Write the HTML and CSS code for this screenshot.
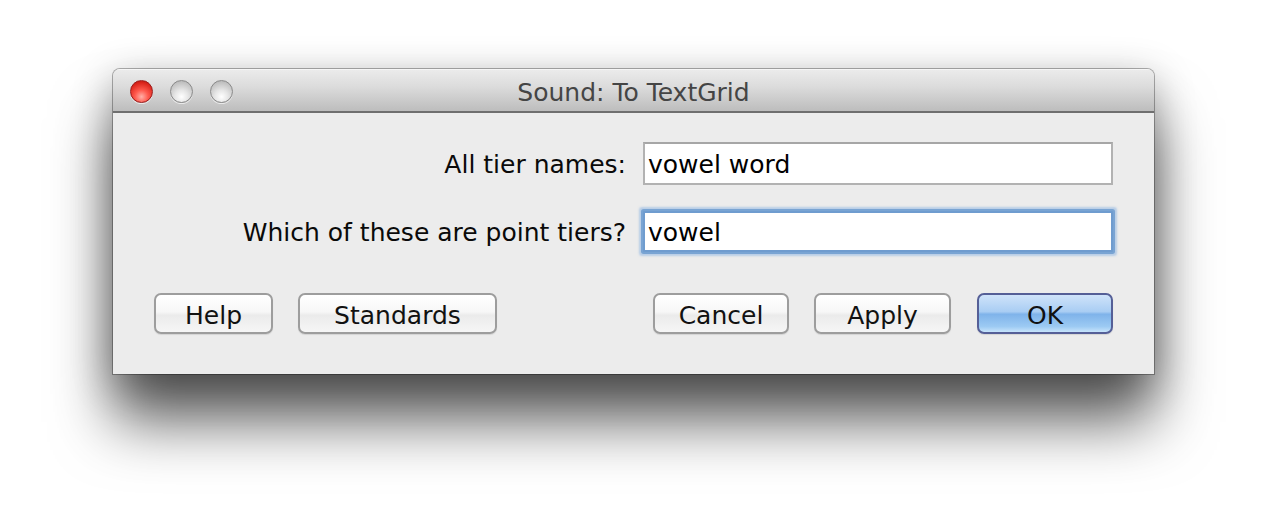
FILE: index.html
```html
<!DOCTYPE html>
<html>
<head>
<meta charset="utf-8">
<link rel="stylesheet" href="styles.css">
</head>
<body>
<div class="window">
  <div class="titlebar">
    <div class="lights">
      <span class="light close"></span>
      <span class="light"></span>
      <span class="light"></span>
    </div>
    <div class="title">Sound: To TextGrid</div>
  </div>
  <div class="content">
    <div class="form">
      <label class="label">All tier names:</label>
      <div class="field">vowel word</div>
      <label class="label">Which of these are point tiers?</label>
      <div class="field focused">vowel</div>
    </div>
    <div class="buttons">
      <div class="group">
        <button class="btn help">Help</button>
        <button class="btn standards">Standards</button>
      </div>
      <div class="group">
        <button class="btn cancel">Cancel</button>
        <button class="btn apply">Apply</button>
        <button class="btn ok">OK</button>
      </div>
    </div>
  </div>
</div>
</body>
</html>
```

FILE: styles.css
```css
html, body {
  margin: 0;
  padding: 0;
  background: #ffffff;
  width: 1268px;
  height: 532px;
  overflow: hidden;
}
body {
  padding-top: 69px;
  box-sizing: border-box;
  font-family: "DejaVu Sans", "Liberation Sans", sans-serif;
}
.window {
  margin-left: 113px;
  width: 1041px;
  height: 305px;
  display: flex;
  flex-direction: column;
  background: #ececec;
  border-radius: 7px 7px 0 0;
  box-shadow: 0 0 0 1px rgba(0,0,0,0.3), 0 48px 60px rgba(0,0,0,0.62), 0 10px 40px rgba(0,0,0,0.3);
  overflow: hidden;
}
.titlebar {
  height: 41px;
  flex: none;
  position: relative;
  display: flex;
  align-items: center;
  justify-content: center;
  background: linear-gradient(#ebebeb 0%, #dcdcdc 40%, #bdbdbd 100%);
  border-top: 1px solid #f6f6f6;
  border-bottom: 2px solid #6f6f6f;
}
.lights {
  position: absolute;
  left: 17px;
  top: 10px;
  display: flex;
  gap: 17px;
}
.light {
  width: 21px;
  height: 21px;
  border-radius: 50%;
  border: 1px solid #8a8a8a;
  background: radial-gradient(circle at 50% 75%, #ffffff 0%, #e6e6e6 35%, #bdbdbd 80%, #a8a8a8 100%);
  box-shadow: 0 1px 0 rgba(255,255,255,0.6);
}
.light.close {
  border-color: #9b1c1c;
  background: radial-gradient(circle at 50% 75%, #ffb0a8 0%, #ff5a4e 35%, #d9231a 75%, #a8150f 100%);
}
.title {
  font-size: 25px;
  color: #454545;
  margin-top: 3px;
}
.content {
  flex: 1;
  display: flex;
  flex-direction: column;
  padding: 29px 41px 0 41px;
}
.form {
  display: grid;
  grid-template-columns: auto 470px;
  justify-content: end;
  column-gap: 17px;
  row-gap: 26px;
  align-items: center;
}
.label {
  font-size: 25px;
  color: #0a0a0a;
  text-align: right;
  padding-top: 2px;
}
.field {
  height: 43px;
  box-sizing: border-box;
  background: #fff;
  border: 2px solid #b2b2b2;
  border-top-color: #a6a6a6;
  font-size: 25px;
  color: #000;
  padding-left: 3px;
  padding-top: 2px;
  display: flex;
  align-items: center;
}
.field.focused {
  height: 41px;
  border-color: #6f9ccf;
  box-shadow: 0 0 0 2px rgba(111,156,207,0.85), 0 0 2px 4px rgba(140,180,225,0.55);
  border-radius: 1px;
}
.buttons {
  margin-top: 41px;
  display: flex;
  justify-content: space-between;
}
.group {
  display: flex;
  gap: 25px;
}
.btn {
  height: 41px;
  box-sizing: border-box;
  font-family: "DejaVu Sans", "Liberation Sans", sans-serif;
  font-size: 25px;
  color: #111;
  border: 2px solid #9d9d9d;
  border-radius: 7px;
  background: linear-gradient(#ffffff 0%, #f7f7f7 45%, #ebebeb 55%, #f6f6f6 100%);
  padding: 3px 0 0 0;
  line-height: 1;
  box-shadow: 0 1px 1px rgba(0,0,0,0.1);
}
.help { width: 119px; }
.standards { width: 199px; }
.cancel { width: 136px; }
.apply { width: 137px; }
.ok {
  width: 136px;
  margin-left: 1px;
  border-color: #555f97;
  background: linear-gradient(#cfe3fa 0%, #a9cdf3 45%, #7fb3ea 52%, #9ccaf3 85%, #c7e4fb 100%);
}
```
